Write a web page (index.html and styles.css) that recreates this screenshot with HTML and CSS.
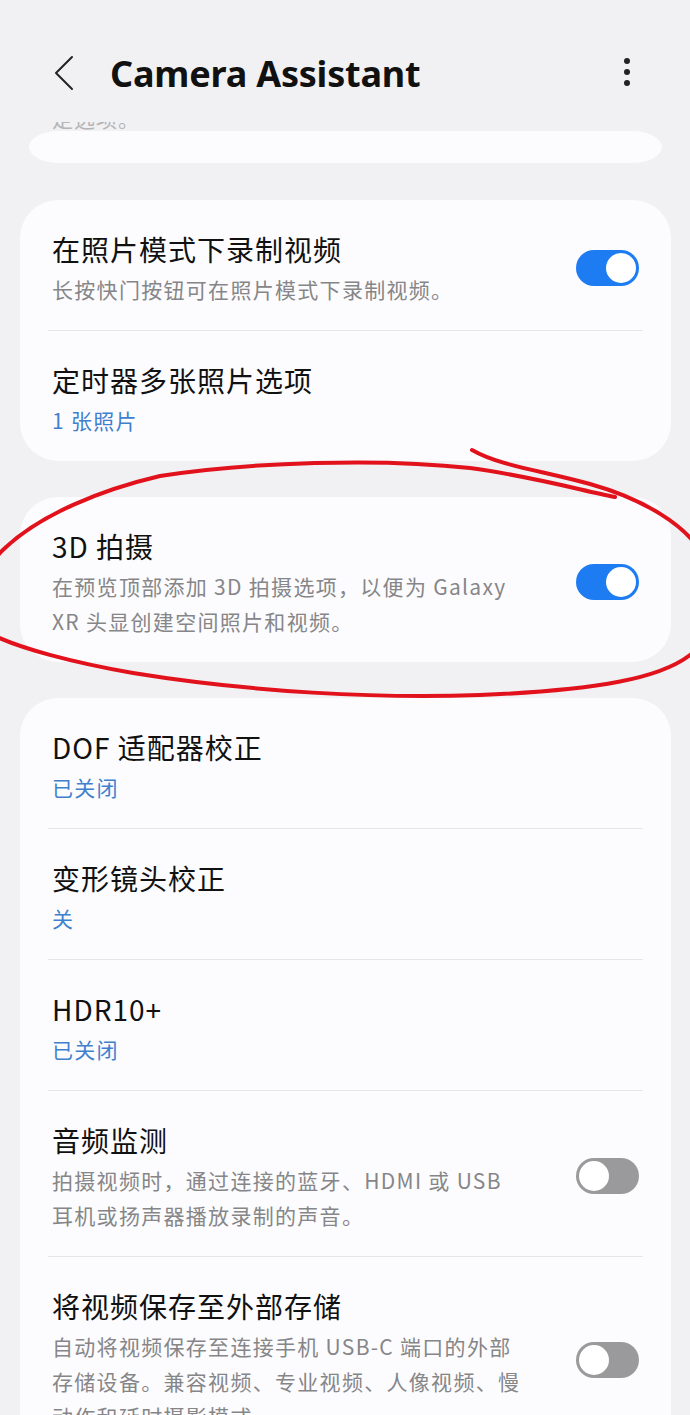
FILE: index.html
```html
<!DOCTYPE html>
<html lang="zh-CN">
<head>
<meta charset="utf-8">
<title>Camera Assistant</title>
<link rel="stylesheet" href="styles.css">
</head>
<body>
<div class="screen">
  <header class="appbar">
    <svg class="back" width="24" height="36" viewBox="0 0 24 36"><path d="M20 2 L4 18 L20 34" fill="none" stroke="#222" stroke-width="2" stroke-linecap="round" stroke-linejoin="round"/></svg>
    <h1 class="appbar-title">Camera Assistant</h1>
    <svg class="more" width="10" height="32" viewBox="0 0 10 32"><circle cx="5" cy="4" r="3" fill="#222"/><circle cx="5" cy="15" r="3" fill="#222"/><circle cx="5" cy="26" r="3" fill="#222"/></svg>
  </header>

  <main class="content">
    <div class="peek-clip"><span class="peek-text">定选项。</span></div>
    <div class="peek"></div>

    <section class="card">
      <div class="row">
        <div class="text">
          <div class="title">在照片模式下录制视频</div>
          <div class="sub">长按快门按钮可在照片模式下录制视频。</div>
        </div>
        <div class="switch on"><span class="knob"></span></div>
      </div>
      <hr class="divider">
      <div class="row">
        <div class="text">
          <div class="title">定时器多张照片选项</div>
          <div class="sub blue">1 张照片</div>
        </div>
      </div>
    </section>

    <section class="card">
      <div class="row">
        <div class="text">
          <div class="title">3D 拍摄</div>
          <div class="sub">在预览顶部添加 3D 拍摄选项，以便为 Galaxy<br>XR 头显创建空间照片和视频。</div>
        </div>
        <div class="switch on"><span class="knob"></span></div>
      </div>
    </section>

    <section class="card">
      <div class="row">
        <div class="text">
          <div class="title">DOF 适配器校正</div>
          <div class="sub blue">已关闭</div>
        </div>
      </div>
      <hr class="divider">
      <div class="row">
        <div class="text">
          <div class="title">变形镜头校正</div>
          <div class="sub blue">关</div>
        </div>
      </div>
      <hr class="divider">
      <div class="row">
        <div class="text">
          <div class="title">HDR10+</div>
          <div class="sub blue">已关闭</div>
        </div>
      </div>
      <hr class="divider">
      <div class="row">
        <div class="text">
          <div class="title">音频监测</div>
          <div class="sub">拍摄视频时，通过连接的蓝牙、HDMI 或 USB<br>耳机或扬声器播放录制的声音。</div>
        </div>
        <div class="switch"><span class="knob"></span></div>
      </div>
      <hr class="divider">
      <div class="row">
        <div class="text">
          <div class="title">将视频保存至外部存储</div>
          <div class="sub">自动将视频保存至连接手机 USB-C 端口的外部<br>存储设备。兼容视频、专业视频、人像视频、慢<br>动作和延时摄影模式。</div>
        </div>
        <div class="switch"><span class="knob"></span></div>
      </div>
    </section>
  </main>

  <svg class="annotation" width="690" height="1415" viewBox="0 0 690 1415">
    <path d="M472 450 C500 466 540 470 590 484 C640 498 690 525 705 560 C720 600 710 640 690 655 C660 678 600 690 480 695 C380 699 250 692 133 673 C70 662 20 648 -5 636 C-30 620 -20 570 5 548 C40 515 100 490 160 476 C250 462 380 458 470 468 C530 476 580 490 615 497" fill="none" stroke="#e1121c" stroke-width="4" stroke-linecap="round" stroke-linejoin="round"/>
  </svg>
</div>
</body>
</html>
```

FILE: styles.css
```css
* { box-sizing: border-box; }

html, body {
  margin: 0;
  padding: 0;
  background: #f1f1f3;
}

body {
  font-family: "Noto Sans CJK SC", "Noto Sans", sans-serif;
  color: #111;
}

.screen {
  position: relative;
  width: 690px;
  height: 1415px;
  overflow: hidden;
}

.appbar {
  display: flex;
  align-items: center;
  height: 98px;
  margin-top: 24px;
  padding: 0 58px 0 52px;
}

.back { flex: none; }

.appbar-title {
  flex: 1;
  margin: 0 0 0 34px;
  font-family: "Noto Sans", "Noto Sans CJK SC", sans-serif;
  font-weight: 700;
  font-size: 36px;
  letter-spacing: -0.2px;
  color: #111;
}

.more { flex: none; }

.content {
  padding: 0 19px 0 20px;
}

.peek-clip {
  height: 9px;
  overflow: hidden;
  padding-left: 32px;
}

.peek-text {
  display: block;
  margin-top: -15px;
  font-size: 21px;
  line-height: 22px;
  letter-spacing: 1px;
  color: #b5b5b7;
}

.peek {
  height: 32px;
  margin: 0 9px 37px;
  background: #fcfcfe;
  border-radius: 30px / 16px;
}

.card {
  background: #fcfcfe;
  border-radius: 38px;
  margin-bottom: 36px;
}

.row {
  display: flex;
  align-items: center;
  gap: 24px;
  padding: 28px 32px 23px;
}

.text {
  flex: 1;
  min-width: 0;
}

.title {
  font-size: 28px;
  line-height: 42px;
  letter-spacing: 1px;
  color: #111;
}

.sub {
  margin-top: 2px;
  font-size: 21px;
  line-height: 35px;
  letter-spacing: 1.3px;
  color: #868688;
}

.sub.blue {
  color: #3f80cd;
}

.divider {
  margin: 0 28px;
  height: 1px;
  border: none;
  background: #e6e6e8;
}

.switch {
  flex: none;
  display: flex;
  align-items: center;
  justify-content: flex-start;
  width: 63px;
  height: 36px;
  padding: 3px;
  border-radius: 18px;
  background: #9a9a9c;
}

.switch.on {
  justify-content: flex-end;
  background: #1d7cf2;
}

.knob {
  width: 30px;
  height: 30px;
  border-radius: 50%;
  background: #fff;
}

.annotation {
  position: absolute;
  top: 0;
  left: 0;
  pointer-events: none;
}
```
